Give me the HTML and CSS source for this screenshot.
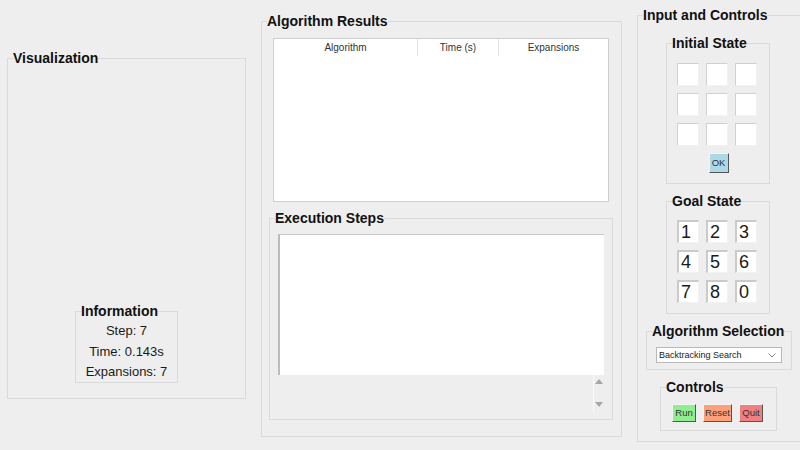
FILE: index.html
```html
<!DOCTYPE html>
<html>
<head>
<meta charset="utf-8">
<link rel="stylesheet" href="styles.css">
</head>
<body>
<div class="app">
  <fieldset class="lf viz">
    <legend>Visualization</legend>
    <div class="viz-body">
      <fieldset class="lf info">
        <legend>Information</legend>
        <div class="info-body">
          <div>Step: 7</div>
          <div>Time: 0.143s</div>
          <div>Expansions: 7</div>
        </div>
      </fieldset>
    </div>
  </fieldset>

  <fieldset class="lf results">
    <legend>Algorithm Results</legend>
    <div class="tree">
      <div class="tree-head">
        <div class="th c1">Algorithm</div>
        <div class="th c2">Time (s)</div>
        <div class="th c3">Expansions</div>
      </div>
    </div>
    <fieldset class="lf steps">
      <legend>Execution Steps</legend>
      <div class="text-area"></div>
      <div class="scroll-row">
        <div class="scrollbar">
          <svg class="arrow" width="8" height="5" viewBox="0 0 8 5"><polygon points="0,5 8,5 4,0" fill="#a6a6a6"/></svg>
          <svg class="arrow" width="8" height="5" viewBox="0 0 8 5"><polygon points="0,0 8,0 4,5" fill="#a6a6a6"/></svg>
        </div>
      </div>
    </fieldset>
  </fieldset>

  <fieldset class="lf controls-panel">
    <legend>Input and Controls</legend>
    <fieldset class="lf state initial">
      <legend>Initial State</legend>
      <div class="grid">
        <div class="cell"></div><div class="cell"></div><div class="cell"></div>
        <div class="cell"></div><div class="cell"></div><div class="cell"></div>
        <div class="cell"></div><div class="cell"></div><div class="cell"></div>
      </div>
      <div class="ok-row"><div class="btn ok">OK</div></div>
    </fieldset>
    <fieldset class="lf state goal">
      <legend>Goal State</legend>
      <div class="grid">
        <div class="cell">1</div><div class="cell">2</div><div class="cell">3</div>
        <div class="cell">4</div><div class="cell">5</div><div class="cell">6</div>
        <div class="cell">7</div><div class="cell">8</div><div class="cell">0</div>
      </div>
    </fieldset>
    <fieldset class="lf algsel">
      <legend>Algorithm Selection</legend>
      <div class="combo">
        <span>Backtracking Search</span>
        <svg width="8" height="5" viewBox="0 0 8 5"><polyline points="0.5,0.5 4,4 7.5,0.5" fill="none" stroke="#888" stroke-width="1"/></svg>
      </div>
    </fieldset>
    <fieldset class="lf ctrl">
      <legend>Controls</legend>
      <div class="btn-row">
        <div class="btn run">Run</div>
        <div class="btn reset">Reset</div>
        <div class="btn quit">Quit</div>
      </div>
    </fieldset>
  </fieldset>
</div>
</body>
</html>
```
FILE: styles.css
```css
* { box-sizing: border-box; }
html, body {
  margin: 0;
  padding: 0;
  width: 800px;
  height: 450px;
  overflow: hidden;
  background: #eeeeee;
  font-family: "Liberation Sans", Arial, sans-serif;
  color: #111;
}
.app {
  display: flex;
  align-items: flex-start;
  width: 800px;
  height: 450px;
}
.app > .lf { flex-shrink: 0; }
.lf {
  margin: 0;
  padding: 0;
  border: 1px solid #dadada;
  min-width: 0;
}
.lf > legend {
  margin-left: 5px;
  padding: 0;
  font-size: 14px;
  line-height: 17px;
  font-weight: bold;
  color: #111;
}

/* left */
.viz {
  margin-left: 7px;
  margin-top: 50px;
  width: 239px;
  height: 349px;
}
.viz-body {
  height: 100%;
  display: flex;
  flex-direction: column;
  justify-content: flex-end;
  align-items: center;
  padding-bottom: 15px;
}
.info {
  width: 103px;
  height: 80px;
}
.info-body {
  padding-top: 1px;
  text-align: center;
  font-size: 13px;
  line-height: 20.5px;
  color: #1a1a1a;
}

/* middle */
.results {
  margin-left: 15px;
  margin-top: 13px;
  width: 361px;
  height: 424px;
}
.tree {
  margin: 8px 0 0 11px;
  width: 336px;
  height: 164px;
  background: #fff;
  border: 1px solid #cfcfcf;
}
.tree-head {
  display: flex;
  height: 17px;
  font-size: 10px;
  line-height: 17px;
  color: #333;
}
.th { text-align: center; border-right: 1px solid #e3e3e3; }
.c1 { width: 144px; }
.c2 { width: 81px; }
.c3 { flex: 1; border-right: none; }

.steps {
  margin: 8px 0 0 7px;
  width: 344px;
  height: 210px;
}
.text-area {
  margin: 7px 0 0 8px;
  width: 326px;
  height: 141px;
  background: #fff;
  border-top: 1px solid #c8c8c8;
  border-left: 2px solid #bcbcbc;
}
.scroll-row {
  display: flex;
  justify-content: flex-end;
  width: 334px;
}
.scrollbar {
  width: 11px;
  height: 37px;
  border-left: 1px solid #fafafa;
  display: flex;
  flex-direction: column;
  align-items: center;
  justify-content: space-between;
  padding: 4px 0 5px;
}
.arrow { display: block; }

/* right */
.controls-panel {
  margin-left: 15px;
  margin-top: 7px;
  width: 180px;
  height: 435px;
}
.state {
  margin-left: 28px;
  width: 104px;
}
.initial { margin-top: 11px; height: 149px; }
.goal { margin-top: 9px; height: 121px; }
.grid {
  display: grid;
  grid-template-columns: repeat(3, 22px);
  grid-auto-rows: 23px;
  column-gap: 7px;
  row-gap: 7px;
  margin: 11px 0 0 10px;
}
.goal .grid { margin-top: 10px; }
.cell {
  background: #fff;
  border-top: 1px solid #d0d0d0;
  border-left: 1px solid #d0d0d0;
  border-right: 1px solid #f2f2f2;
  border-bottom: 1px solid #f2f2f2;
  font-size: 18px;
  line-height: 21px;
  padding-left: 2px;
  color: #1a1a1a;
}
.goal .cell {
  border-top: 2px solid #cacaca;
  border-left: 2px solid #cacaca;
  line-height: 20px;
  padding-left: 2px;
}
.ok-row {
  display: flex;
  justify-content: center;
  margin-top: 7px;
  padding-right: 1px;
}
.btn {
  font-size: 9.5px;
  color: #333;
  text-align: center;
  border-top: 1px solid #f4f4f4;
  border-left: 1px solid #f4f4f4;
  border-right: 1px solid #555;
  border-bottom: 1px solid #555;
}
.ok {
  width: 20px;
  height: 20px;
  line-height: 18px;
  background: #add8e6;
  margin-left: 2px;
}
.algsel {
  margin: 9px 0 0 8px;
  width: 146px;
  height: 47px;
}
.combo {
  margin: 7px 0 0 9px;
  width: 126px;
  height: 16px;
  background: #fff;
  border: 1px solid #b9b9b9;
  display: flex;
  align-items: center;
  justify-content: space-between;
  padding: 0 5px 0 2px;
  font-size: 9px;
  color: #222;
}
.combo svg { display: block; }
.ctrl {
  margin: 9px 0 0 22px;
  width: 117px;
  height: 52px;
}
.btn-row {
  display: flex;
  gap: 7px;
  margin: 8px 0 0 11px;
}
.btn-row .btn {
  height: 18px;
  line-height: 16px;
}
.run { width: 24px; background: #90ee90; }
.reset { width: 29px; background: #ffa07a; }
.quit { width: 24px; background: #f08080; }
```
